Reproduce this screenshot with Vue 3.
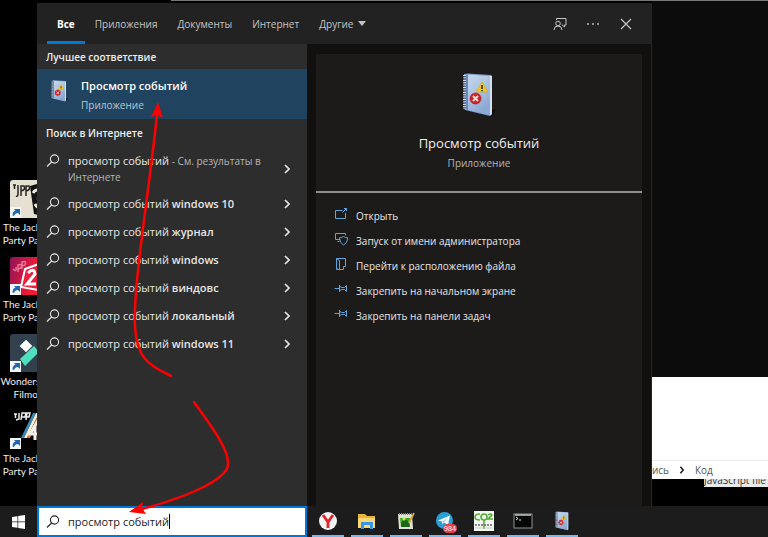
<script setup>
import { ref } from 'vue'

const query = ref('просмотр событий')
const tabs = ['Все', 'Приложения', 'Документы', 'Интернет']
const suggestions = ['windows 10', 'журнал', 'windows', 'виндовс', 'локальный', 'windows 11']
const actions = [
  { icon: 'open', label: 'Открыть' },
  { icon: 'admin', label: 'Запуск от имени администратора' },
  { icon: 'folder', label: 'Перейти к расположению файла' },
  { icon: 'pin', label: 'Закрепить на начальном экране' },
  { icon: 'pin', label: 'Закрепить на панели задач' },
]
const shortcuts = [
  { art: 'jpp3', first: 'The Jackbox', second: 'Party Pack 3' },
  { art: 'jpp2', first: 'The Jackbox', second: 'Party Pack 2' },
  { art: 'filmora', first: 'Wondershare', second: 'Filmora' },
  { art: 'jpp4', first: 'The Jackbox', second: 'Party Pack 4' },
]
const apps = ['yandex', 'explorer', 'notepad', 'telegram', 'co2', 'console', 'events']
</script>

<template>
  <div class="screen">
    <svg class="defs" width="0" height="0" aria-hidden="true">
      <defs>
        <linearGradient id="cover" x1="0" y1="0" x2="0.5" y2="1">
          <stop offset="0" stop-color="#c9d9ea" />
          <stop offset="0.5" stop-color="#adc4e2" />
          <stop offset="1" stop-color="#8ca8d4" />
        </linearGradient>
        <linearGradient id="pink" x1="0" y1="0" x2="1" y2="0.3">
          <stop offset="0" stop-color="#8d1458" />
          <stop offset="0.7" stop-color="#f01b35" />
        </linearGradient>
        <symbol id="book" viewBox="0 0 34 44">
          <path d="M27 36 L34 36 L31 42 L27 43Z" fill="#0a0a0a" opacity="0.6" />
          <path d="M2 1 L6 0.500 L29 2 L30 3 L30 41 L28 43 L3 37 L1.500 35Z" fill="#7e9dcc" />
          <path d="M4 1.500 L28 3 L28 42 L4 36.500Z" fill="url(#cover)" />
          <path d="M28 3 L30 3 L30 41 L28 42.500Z" fill="#d5e0ee" />
          <path d="M4 1.500 L6 1.600 L6 37 L4 36.500Z" fill="#6889bf" />
          <path d="M2.500 2 V36" stroke="#d0d4d8" stroke-width="3" stroke-dasharray="1.200 1.200" />
          <path d="M2.500 3.200 V36" stroke="#39414b" stroke-width="3" stroke-dasharray="0.800 1.600" />
          <path d="M20 9 L26 19 H14Z" fill="#f5ca16" stroke="#d7ab25" stroke-width="0.700" />
          <path d="M20 12 V16 M20 17 V18.300" stroke="#20252b" stroke-width="1.500" />
          <circle cx="13.500" cy="25.500" r="5.500" fill="#d32026" stroke="#a3212c" stroke-width="0.700" />
          <path d="M11 23 L16 28 M16 23 L11 28" stroke="#f1dddd" stroke-width="1.900" />
        </symbol>
        <symbol id="loupe" viewBox="0 0 14 14">
          <circle cx="8.500" cy="5" r="4.100" fill="none" stroke="currentColor" stroke-width="1.100" />
          <path d="M5.600 8 L1 12.500" stroke="currentColor" stroke-width="1.100" />
        </symbol>
        <symbol id="chevron" viewBox="0 0 6 10">
          <path d="M1 1 L5 5 L1 9" fill="none" stroke="currentColor" stroke-width="1.700" />
        </symbol>
      </defs>
    </svg>

    <div class="workspace">
      <aside class="shortcuts">
        <a v-for="s in shortcuts" :key="s.art" class="shortcut" href="#">
          <svg class="art" viewBox="0 0 38 38" aria-hidden="true">
            <g v-if="s.art === 'jpp3'">
              <rect width="38" height="38" rx="3" fill="#e5e0d2" />
              <path d="M3 5h3 M4.500 5v4 M8 5v9q0 3-2 2 M11 16V6h3q2 4-3 5 M16 16V6h3q2 4-3 5" fill="none" stroke="#252525" stroke-width="1.500" />
              <path d="M20 6 L38 1 V38 L24 34Z" fill="#111" />
              <path d="M23 13q4-6 8 0q1 5-4 5q7 1 5 7q-4 5-7-1" fill="none" stroke="#eee9da" stroke-width="3" />
            </g>
            <g v-else-if="s.art === 'jpp2'">
              <rect width="38" height="38" rx="3" fill="url(#pink)" />
              <path d="M3 12q4 4 3-2 M8 15V8q5-2 3 3l-3 1 M12 12V5q5-2 3 3l-3 1" fill="none" stroke="#ee7697" stroke-width="1.500" />
              <path d="M15 12 L34 5 V34 L11 30Z" fill="#e7223e" stroke="#fff" stroke-width="2" />
              <path d="M18 16q6-6 7 1L17 27h9" fill="none" stroke="#fff" stroke-width="3" />
            </g>
            <g v-else-if="s.art === 'filmora'">
              <rect width="38" height="38" rx="3" fill="#32414d" />
              <rect x="11.500" y="7.500" width="9" height="9" fill="#fff" transform="rotate(45 16 12)" />
              <path d="M10 25 L24 12 L29 18 L15 32Z" fill="#4fe0bd" />
            </g>
            <g v-else>
              <path d="M4 3h3M5.500 3v4 M9 2v6l-3 1 M11 9l1-7h4l-1 4h-3 M16 9l1-7h3l-1 4h-3" fill="none" stroke="#eee" stroke-width="1.500" />
              <path d="M23 2 L11 27 H14 L26 2Z" fill="#358ab7" />
              <path d="M26 2 L14 27 H17 L29 2Z" fill="#f3eee2" />
              <path d="M29 2 L17 27 H20 L32 2Z" fill="#d77f2a" />
              <path d="M32 3 L20 23 H38 M25 14V29" fill="none" stroke="#f7f2e9" stroke-width="3" />
            </g>
            <rect y="27" width="11" height="11" fill="#f4f6f8" />
            <path d="M2.500 35.500q0-4 3-5L4 29h6v6L8 33q-3 0-4 3Z" fill="#2266b2" />
          </svg>
          <span>{{ s.first }}</span>
          <span>{{ s.second }}</span>
        </a>
      </aside>

      <div class="center">
        <div class="strip"></div>
        <section class="search-panel">
          <header class="tabs">
            <button v-for="(t, i) in tabs" :key="t" type="button" class="tab" :class="{ active: i === 0 }">{{ t }}</button>
            <button type="button" class="tab more">
              Другие
              <svg width="8" height="5" viewBox="0 0 8 5" aria-hidden="true"><path d="M0 0H8L4 5Z" fill="currentColor" /></svg>
            </button>
            <div class="tools">
              <button type="button" class="tool" aria-label="Отзыв">
                <svg width="14" height="14" viewBox="0 0 14 14" fill="none" stroke="currentColor" aria-hidden="true">
                  <circle cx="5" cy="6.500" r="2.300" />
                  <path d="M1 13q0-4 4-4t4 4 M3.500 3V1.500H13V8H11.500V10L8.800 7.500" />
                </svg>
              </button>
              <button type="button" class="tool" aria-label="Параметры">
                <svg width="14" height="14" viewBox="0 0 14 14" fill="currentColor" aria-hidden="true">
                  <circle cx="2" cy="7" r="0.900" /><circle cx="7" cy="7" r="0.900" /><circle cx="12" cy="7" r="0.900" />
                </svg>
              </button>
              <button type="button" class="tool" aria-label="Закрыть">
                <svg width="14" height="14" viewBox="0 0 14 14" fill="none" stroke="currentColor" stroke-width="1.200" aria-hidden="true">
                  <path d="M2 2 L12 12 M12 2 L2 12" />
                </svg>
              </button>
            </div>
          </header>

          <div class="columns">
            <div class="results">
              <h2>Лучшее соответствие</h2>
              <button type="button" class="best">
                <svg width="17" height="22" aria-hidden="true"><use href="#book" /></svg>
                <span class="best-text">
                  <strong>Просмотр событий</strong>
                  <small>Приложение</small>
                </span>
              </button>
              <h2 class="web">Поиск в Интернете</h2>
              <button type="button" class="row tall">
                <svg class="loupe" width="14" height="14" aria-hidden="true"><use href="#loupe" /></svg>
                <span class="row-text">просмотр событий <small>- См. результаты в Интернете</small></span>
                <svg class="chevron" width="6" height="10" aria-hidden="true"><use href="#chevron" /></svg>
              </button>
              <button v-for="s in suggestions" :key="s" type="button" class="row">
                <svg class="loupe" width="14" height="14" aria-hidden="true"><use href="#loupe" /></svg>
                <span class="row-text">просмотр событий <b>{{ s }}</b></span>
                <svg class="chevron" width="6" height="10" aria-hidden="true"><use href="#chevron" /></svg>
              </button>
            </div>

            <div class="detail">
              <div class="card">
                <div class="hero">
                  <svg width="34" height="44" aria-hidden="true"><use href="#book" /></svg>
                  <h1>Просмотр событий</h1>
                  <p>Приложение</p>
                </div>
                <div class="actions">
                  <button v-for="a in actions" :key="a.label" type="button" class="action">
                    <svg width="14" height="14" viewBox="0 0 14 14" fill="none" stroke="currentColor" aria-hidden="true">
                      <path v-if="a.icon === 'open'" d="M8.500 3.500H1.500V11.500H11.500V6 M8.500 5.500L12.500 1.500 M10 1.500H12.500V4" />
                      <path v-else-if="a.icon === 'admin'" d="M6 7.500H1.500V1.500H11.500V3.500 M3.500 9.500H5.500 M9.500 4.500q2 1.500 4 1.200q.200 5-4 7.300q-4-2-4-7.300q2 .200 4-1.200Z" />
                      <path v-else-if="a.icon === 'folder'" d="M5 12.500H2.500V1.500H11.500V9.500H9.500V12.500H6 M2.500 1.500L5.500 3.500V13L2.500 11.500Z" />
                      <path v-else d="M0.500 6.500H5.500 M5.500 3V10 M5.500 4.500L8 5.500H10.500L12.500 3.500V9.500L10.500 7.500H8L5.500 8.500" />
                    </svg>
                    <span>{{ a.label }}</span>
                  </button>
                </div>
              </div>
            </div>
          </div>
        </section>
      </div>

      <div class="behind">
        <div class="window">
          <nav class="crumbs">
            <span class="cut">пись</span>
            <svg width="6" height="8" viewBox="0 0 6 10" aria-hidden="true"><path d="M1 1L4.500 5L1 9" fill="none" stroke="currentColor" stroke-width="2" /></svg>
            <span>Код</span>
          </nav>
        </div>
        <div class="tip"><span>JavaScript file</span></div>
      </div>
    </div>

    <footer class="taskbar">
      <button type="button" class="start" aria-label="Пуск">
        <svg width="13" height="14" viewBox="0 0 13 14" fill="#fff" aria-hidden="true">
          <path d="M0 2L5.500 1.200V6.500H0Z M6.200 1.100L13 0V6.500H6.200Z M0 7.300H5.500V12.700L0 12Z M6.200 7.300H13V14L6.200 12.900Z" />
        </svg>
      </button>
      <div class="search">
        <label for="query" aria-label="Поиск"><svg width="14" height="14" aria-hidden="true"><use href="#loupe" /></svg></label>
        <input id="query" v-model="query" type="text" autocomplete="off" spellcheck="false" />
        <i class="caret"></i>
      </div>
      <div class="apps">
        <button v-for="a in apps" :key="a" type="button" class="app" :aria-label="a">
          <svg width="22" height="22" viewBox="0 0 22 22" aria-hidden="true">
            <g v-if="a === 'yandex'">
              <circle cx="11" cy="11" r="9" fill="#f3f3f3" />
              <path d="M6 5L11 12L16 5 M11 12V18" fill="none" stroke="#e3222a" stroke-width="2.800" />
            </g>
            <g v-else-if="a === 'explorer'">
              <path d="M2 4H9L11 6H19V18H2Z" fill="#e9b334" />
              <path d="M2 8H19V18H2Z" fill="#fbd779" />
              <path d="M5 19V12H17V19H14V15H8V19Z" fill="#3698df" />
            </g>
            <g v-else-if="a === 'notepad'">
              <path d="M3 4H17L18 19H4Z" fill="#dfe3d7" />
              <path d="M4 4H17" stroke="#858986" stroke-width="2" stroke-dasharray="1 1" />
              <path d="M5 8H15V17H6Z" fill="#42a91d" />
              <path d="M6 13Q9 7 13 11L15 17H6Z" fill="#1e6719" />
              <circle cx="9" cy="9" r="1.500" fill="#cbec55" />
              <path d="M19 3L14 13" stroke="#d5a53b" stroke-width="1.800" />
            </g>
            <g v-else-if="a === 'telegram'">
              <circle cx="10.500" cy="10.500" r="8.500" fill="#299fd8" />
              <path d="M4 10.500L16 5.500L14 15L10 12.500L8 14V11.500Z" fill="#f4fbff" />
              <path d="M8 11.500L14 7.500L10 12.500" fill="#a8d5ec" />
            </g>
            <g v-else-if="a === 'co2'">
              <rect x="1" y="1" width="20" height="20" fill="#f4f6f2" />
              <path d="M7 4Q2 4 2 7T7 10 M11 4Q8 4 8 7T11 10T14 7T11 4 M15 5Q18 3 19 5L15 9H20 M11 10V19" fill="none" stroke="#55ae38" stroke-width="1.600" />
              <path d="M2 15H20" stroke="#666" stroke-width="1.500" stroke-dasharray="2 1" />
              <path d="M2 18H20" stroke="#c2cfbd" />
            </g>
            <g v-else-if="a === 'console'">
              <rect x="2" y="4" width="18" height="14" fill="#050505" stroke="#8e9295" />
              <path d="M3 5H19" stroke="#c5c8ca" stroke-width="1.500" />
              <path d="M4 7L6 8.500L4 10 M7 10H9" fill="none" stroke="#ddd" />
            </g>
            <use v-else href="#book" x="4" y="1" width="15" height="20" />
          </svg>
          <span v-if="a === 'telegram'" class="badge">984</span>
        </button>
      </div>
    </footer>

    <svg class="annotations" width="768" height="537" viewBox="0 0 768 537" aria-hidden="true">
      <g fill="none" stroke="#f00" stroke-width="2.500" stroke-linecap="round">
        <path d="M171 376C148 365 137 358 135 327C133 285 148 200 157 115" />
        <path d="M194 402C214 430 229 450 228 464C228 478 194 495 142 509" />
      </g>
      <path d="M158 102L163 118L157 115L151 117Z M129 512L143 502L142 508L146 514Z" fill="#f00" />
    </svg>
  </div>
</template>

<style>
body {
  margin: 0;
  background: #000;
}
</style>

<style scoped>
.screen {
  position: relative;
  display: flex;
  flex-direction: column;
  min-height: 100vh;
  overflow: hidden;
  background: #000;
  color: #e6e6e6;
  font-family: "Open Sans", "Noto Sans", sans-serif;
  font-size: 11px;
  line-height: 16px;
}
.defs { position: absolute; }
svg { display: block; flex: none; }
button {
  margin: 0;
  padding: 0;
  border: 0;
  background: none;
  color: inherit;
  font: inherit;
  text-align: left;
}
h1, h2, p { margin: 0; font-weight: 400; }

.workspace { display: flex; flex: 1; }
.shortcuts {
  display: flex;
  flex-direction: column;
  gap: 10px;
  width: 37px;
  padding-top: 180px;
  overflow: hidden;
}
.shortcut {
  width: 60px;
  color: #eee;
  font-family: Lato, "Open Sans", sans-serif;
  font-size: 10px;
  line-height: 13px;
  text-align: center;
  text-decoration: none;
  white-space: nowrap;
}
.shortcut span { display: block; }
.art { width: 38px; height: 38px; margin: 0 0 3px 10px; }

.center {
  display: flex;
  flex: 0 1 615px;
  flex-direction: column;
}
.strip {
  height: 2px;
  margin-left: 134px;
  border-top: 1px solid #777;
}
.search-panel {
  display: flex;
  flex: 1;
  flex-direction: column;
  border-right: 1px solid #252525;
  background: #11100e;
}
.tabs {
  display: flex;
  height: 41px;
  padding-left: 10px;
  background: #222;
  color: #c4c4c4;
  font-size: 10px;
}
.tab { padding: 3px 10px 0; border-bottom: 3px solid transparent; }
.tab.active { border-color: #0078d7; color: #fff; font-weight: 700; }
.more { display: flex; align-items: center; gap: 5px; }
.tools {
  display: flex;
  align-items: center;
  gap: 19px;
  margin-left: auto;
  padding-right: 18px;
}
.columns { display: flex; flex: 1; }
.results {
  flex: 0 0 270px;
  background: #2d2d2d;
}
.results h2 {
  padding: 5px 9px 4px;
  color: #eee;
  font-size: 10px;
  font-weight: 600;
}
.results .web { padding: 6px 9px; }
.best {
  display: flex;
  align-items: flex-start;
  gap: 13px;
  width: 100%;
  height: 50px;
  padding: 11px 14px;
  background: #20435f;
}
.best-text { display: flex; flex-direction: column; gap: 3px; margin-top: -2px; }
.best strong { color: #fff; font-size: 11px; font-weight: 600; }
.best small { color: #b9c7d3; font-size: 10px; }
.row {
  display: flex;
  align-items: center;
  gap: 8px;
  width: 100%;
  height: 28px;
  padding: 0 17px 0 9px;
}
.row.tall { height: 43px; }
.tall .loupe { margin-bottom: 16px; }
.row-text { flex: 1; }
.row-text small { color: #b5b5b5; font-size: 10px; }
.row-text b { font-weight: 600; }

.detail { display: flex; flex: 1; padding: 10px 9px 0; }
.card { flex: 1; background: #1c1b19; }
.hero {
  display: flex;
  flex-direction: column;
  align-items: center;
  height: 119px;
  padding-top: 19px;
  border-bottom: 2px solid #8f8e8c;
  box-sizing: border-box;
  height: 139px;
}
.hero h1 { margin-top: 16px; color: #eee; font-size: 13px; line-height: 20px; }
.hero p { margin-top: 2px; color: #b5b5b5; font-size: 10px; }
.actions { padding: 10px 18px; }
.action {
  display: flex;
  align-items: center;
  gap: 8px;
  height: 25px;
  font-size: 10px;
}
.action svg { margin-bottom: 4px; color: #5da5da; }

.behind {
  flex: 1;
  min-width: 0;
  border-top: 1px solid #777;
  background: linear-gradient(#0c0c0c 376px, #000 376px);
}
.window {
  display: flex;
  align-items: flex-end;
  height: 102px;
  margin-top: 376px;
  background: #fff;
}
.crumbs {
  display: flex;
  flex: 1;
  align-items: center;
  gap: 10px;
  height: 18px;
  border-top: 1px solid #eee;
  color: #555;
  font-size: 10px;
}
.crumbs svg { color: #222; }
.cut {
  display: flex;
  justify-content: flex-end;
  width: 17px;
  overflow: hidden;
}
.tip {
  display: flex;
  align-items: flex-end;
  height: 8px;
  margin-left: 52px;
  overflow: hidden;
  background: #e9e9e9;
  color: #333;
  font-size: 10px;
  line-height: 14px;
}

.taskbar {
  display: flex;
  height: 31px;
  background: #1c1c1c;
}
.start { display: grid; place-items: center; width: 37px; }
.search {
  display: flex;
  flex: 0 1 270px;
  align-items: center;
  box-sizing: border-box;
  padding-left: 7px;
  border: 2px solid #0078d7;
  background: #fff;
  color: #222;
}
.search input {
  field-sizing: content;
  margin: 0 0 0 8px;
  padding: 0;
  border: 0;
  outline: 0;
  background: none;
  color: inherit;
  caret-color: transparent;
  font: inherit;
}
.caret { width: 1px; height: 15px; background: #000; }
.apps { display: flex; gap: 7px; padding-left: 5px; }
.app {
  position: relative;
  display: grid;
  place-items: center;
  width: 32px;
  border-bottom: 2px solid #76b9ed;
}
.badge {
  position: absolute;
  right: 4px;
  bottom: 2px;
  padding: 0 1px;
  border-radius: 5px;
  background: #eb3f42;
  color: #fff;
  font-size: 7px;
  line-height: 9px;
}
.annotations {
  position: absolute;
  top: 0;
  left: 0;
  pointer-events: none;
}
</style>
